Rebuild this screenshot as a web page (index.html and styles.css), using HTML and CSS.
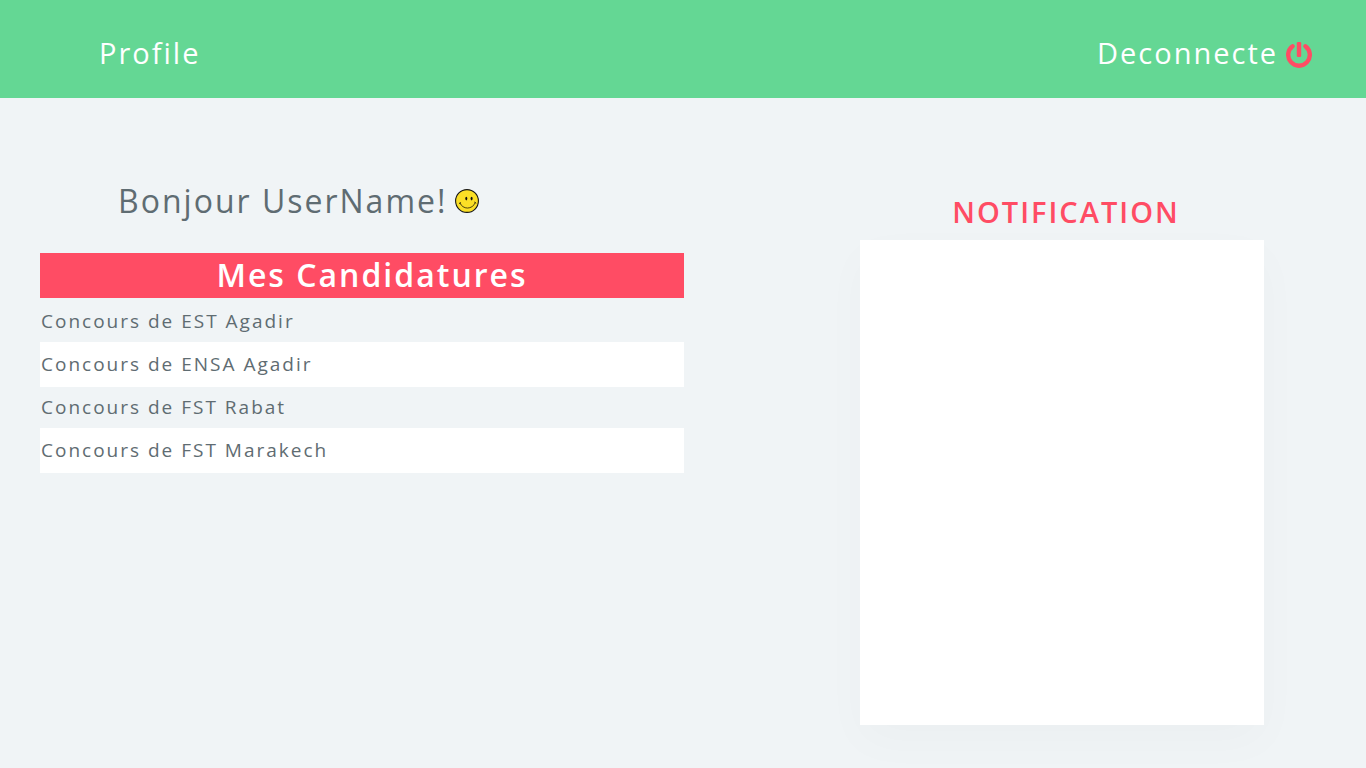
FILE: index.html
```html
<!DOCTYPE html>
<html lang="fr">
<head>
<meta charset="utf-8">
<meta name="viewport" content="width=device-width, initial-scale=1">
<title>Profile</title>
<link rel="stylesheet" href="styles.css">
</head>
<body>
<header class="topbar">
  <a class="topbar-link" href="#profile">Profile</a>
  <button class="topbar-link logout" type="button">Deconnecte
    <svg class="power" viewBox="0 -2 26 30" aria-hidden="true">
      <path d="M6.6 6.2A10.8 10.8 0 1 0 19.4 6.2" fill="none" stroke="currentColor" stroke-width="4.4" stroke-linecap="round"/>
      <rect x="10.8" y="2" width="4.4" height="15" rx="1.2" fill="currentColor"/>
    </svg>
  </button>
</header>
<main class="content">
  <section class="applications">
    <h1 class="greeting">Bonjour UserName!
      <svg class="smiley" viewBox="0 0 24 24" aria-hidden="true">
        <circle cx="12" cy="12" r="11.4" fill="#fbdf26" stroke="#161616" stroke-width="1.1"/>
        <ellipse cx="11.3" cy="9.6" rx="1" ry="1.8" fill="#111"/>
        <ellipse cx="16.6" cy="9.6" rx="1" ry="1.8" fill="#111"/>
        <path d="M5 14C7.5 20.8 17.5 21 20.3 13.6M4.3 14.6l1.4-1M19.6 13.2l1.3.9" fill="none" stroke="#39310c" stroke-width="0.9" stroke-linecap="round"/>
      </svg>
    </h1>
    <h2 class="list-title">Mes Candidatures</h2>
    <ul class="list">
      <li class="item">Concours de EST Agadir</li>
      <li class="item">Concours de ENSA Agadir</li>
      <li class="item">Concours de FST Rabat</li>
      <li class="item">Concours de FST Marakech</li>
    </ul>
  </section>
  <aside class="notifications">
    <h2 class="notifications-title">NOTIFICATION</h2>
    <div class="panel"></div>
  </aside>
</main>
</body>
</html>
```

FILE: styles.css
```css
* {
  box-sizing: border-box;
}

body {
  margin: 0;
  min-height: 100vh;
  display: flex;
  flex-direction: column;
  background: #f0f4f6;
  color: #5f6c72;
  font-family: "Open Sans", "Noto Sans", sans-serif;
  letter-spacing: 2px;
}

.topbar {
  display: flex;
  justify-content: space-between;
  align-items: center;
  padding: 31px 54px 23px 99px;
  background: #64d794;
}

.topbar-link {
  color: #fff;
  font-size: 29px;
  line-height: 44px;
  text-decoration: none;
}

.logout {
  display: flex;
  align-items: center;
  gap: 8px;
  padding: 0;
  border: 0;
  background: none;
  font-family: inherit;
  letter-spacing: inherit;
  cursor: pointer;
}

.power {
  width: 26px;
  height: 30px;
  color: #ff4c64;
}

.content {
  flex: 1;
  display: grid;
  grid-template-columns: 644fr 404fr;
  column-gap: 176px;
  padding: 81px 102px 43px 40px;
}

.greeting {
  display: flex;
  align-items: center;
  gap: 8px;
  margin: 0 0 30px;
  padding-left: 78px;
  font-size: 32px;
  font-weight: 400;
  line-height: 44px;
}

.smiley {
  width: 24px;
  height: 24px;
}

.list-title {
  margin: 0;
  padding: 0 0 2px 20px;
  background: #ff4c64;
  color: #fff;
  font-size: 32px;
  font-weight: 600;
  line-height: 43px;
  text-align: center;
}

.list {
  margin: 0;
  padding: 3px 0 0;
  list-style: none;
}

.item {
  padding-left: 1px;
  font-size: 19px;
  line-height: 41px;
}

.item:nth-child(even) {
  background: #fff;
  line-height: 45px;
}

.notifications {
  display: flex;
  flex-direction: column;
  padding-top: 11px;
}

.notifications-title {
  margin: 0 0 6px;
  padding-left: 8px;
  color: #ff4c64;
  font-size: 29px;
  font-weight: 600;
  line-height: 44px;
  text-align: center;
}

.panel {
  flex: 1;
  background: #fff;
  box-shadow: 0 16px 44px rgba(0, 0, 0, 0.025);
}
```
